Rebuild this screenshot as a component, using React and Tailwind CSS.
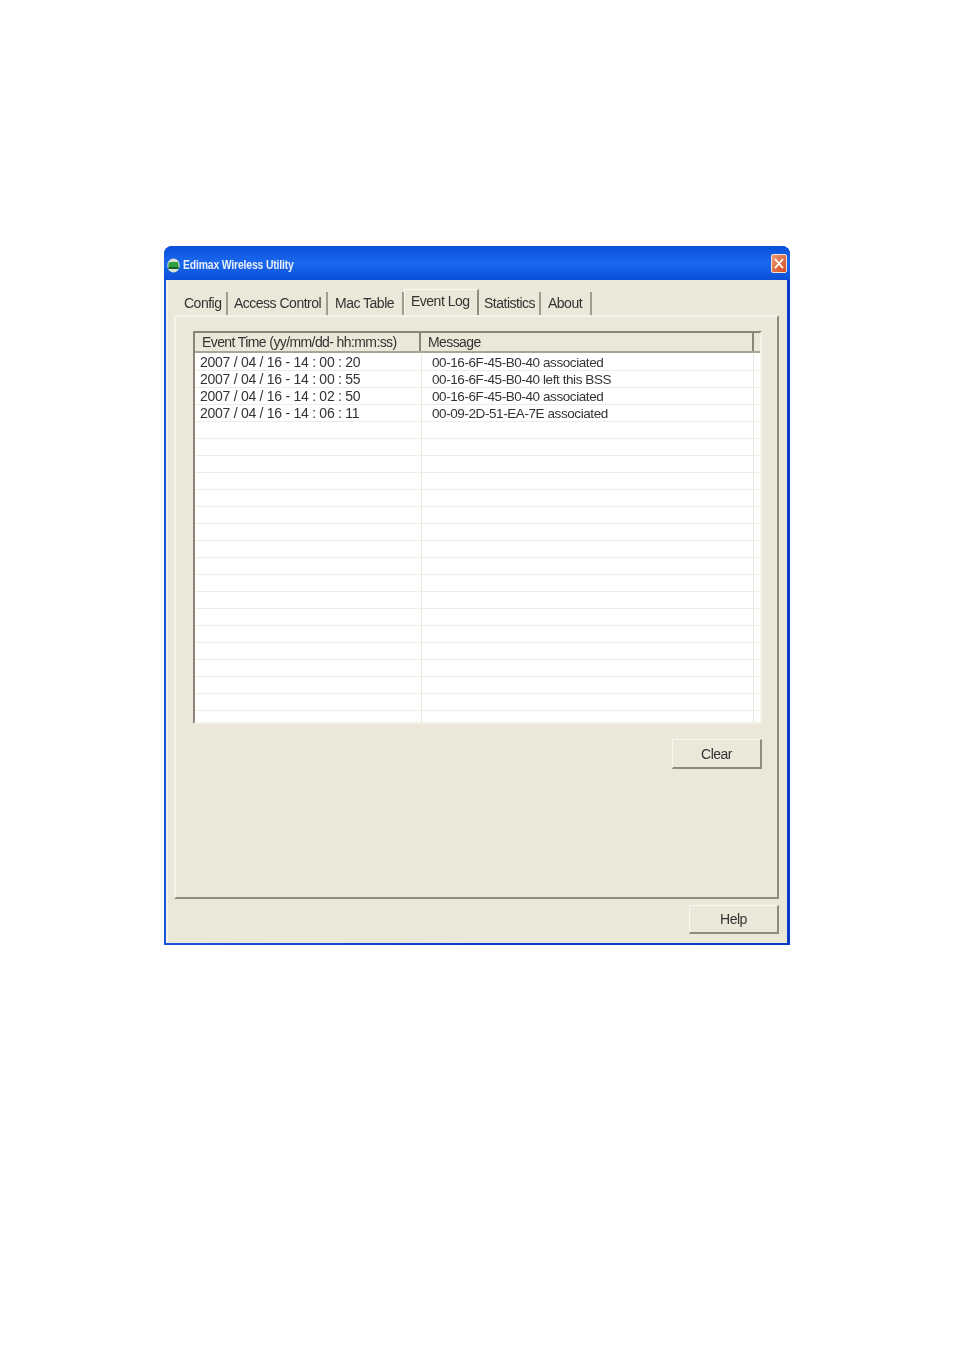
const rows = [
  ['2007 / 04 / 16 - 14 : 00 : 20', '00-16-6F-45-B0-40 associated'],
  ['2007 / 04 / 16 - 14 : 00 : 55', '00-16-6F-45-B0-40 left this BSS'],
  ['2007 / 04 / 16 - 14 : 02 : 50', '00-16-6F-45-B0-40 associated'],
  ['2007 / 04 / 16 - 14 : 06 : 11', '00-09-2D-51-EA-7E associated'],
  ...Array.from({ length: 18 }, () => ['', '']),
]

function Tab({ label, className }) {
  return (
    <div className={`h-[23px] flex items-center border-r-2 border-[#a09d8e] text-[14px] tracking-[-0.5px] text-[#333] ${className}`}>
      {label}
    </div>
  )
}

function XpButton({ label, className }) {
  return (
    <div className={`pt-[1px] flex items-center justify-center border border-t-[#f8f7f0] border-l-[#f8f7f0] border-r-[#8f8c7e] border-b-[#8f8c7e] border-r-2 border-b-2 text-[14px] tracking-[-0.5px] text-[#333] ${className}`}>
      {label}
    </div>
  )
}

function App() {
  return (
    <div className="w-[954px] h-[1350px] bg-white pt-[246px] pl-[164px] font-['Liberation_Sans',sans-serif]">
      <div className="w-[626px] h-[699px] flex flex-col rounded-t-[8px] overflow-hidden bg-gradient-to-r from-[#1a55dc] via-[#0a3bd0] to-[#0a3ac8] [filter:blur(0.35px)]">
        {/* Title bar */}
        <div className="h-[34px] shrink-0 flex items-center justify-between pl-[3px] pr-[3px] pt-[4px] bg-gradient-to-b from-[#0a50d8] via-[#1a68ee] to-[#0a4ed6]">
          <div className="flex items-center gap-[3px]">
            <svg width="13" height="15" viewBox="0 0 13 15">
              <ellipse cx="6.5" cy="7.5" rx="6.2" ry="7" fill="#d8e0d4" />
              <rect x="1.5" y="4" width="10" height="7" rx="1.5" fill="#2f9e3c" />
              <rect x="1.5" y="9" width="10" height="2" fill="#14602a" />
            </svg>
            <span className="text-[13px] font-bold text-[#e8eefc] tracking-[-0.2px] whitespace-nowrap scale-x-[0.8] origin-left">Edimax Wireless Utility</span>
          </div>
          <div className="w-[16px] h-[19px] mb-[3px] flex items-center justify-center rounded-[2px] border border-[#f0e0d8] bg-gradient-to-br from-[#ee9a70] to-[#d0481e]">
            <svg width="10" height="11" viewBox="0 0 10 11">
              <path d="M1 1 L9 10 M9 1 L1 10" stroke="#fff" strokeWidth="1.8" />
            </svg>
          </div>
        </div>

        {/* Dialog body */}
        <div className="flex-1 ml-[2px] mb-[2px] mr-[3px] bg-[#ebe8d9] pt-[12px] pl-[6px] pr-[6px] border-l-2 border-[#f4f3ea]">
          {/* Tabs */}
          <div className="h-[23px] flex items-end pl-[6px] text-[#333]">
            <Tab label="Config" className="w-[48px] pl-[4px]" />
            <Tab label="Access Control" className="w-[100px] pl-[6px]" />
            <Tab label="Mac Table" className="w-[76px] pl-[7px]" />
            <div className="h-[26px] w-[75px] pl-[6px] pb-[3px] flex items-center bg-[#ebe8d9] border-t border-l border-[#f8f7f0] border-r-2 border-r-[#8f8c7e] text-[14px] tracking-[-0.5px] text-[#333]">
              Event Log
            </div>
            <Tab label="Statistics" className="w-[62px] pl-[5px]" />
            <Tab label="About" className="w-[51px] pl-[7px]" />
          </div>

          {/* Tab panel */}
          <div className="w-[605px] h-[584px] pt-[14px] pl-[17px] border-t-2 border-t-[#f4f3ea] border-l-2 border-l-[#f4f3ea] border-r-2 border-r-[#8f8c7e] border-b-2 border-b-[#8f8c7e]">
            {/* Event list */}
            <div className="w-[569px] h-[393px] flex flex-col bg-white border-l-2 border-l-[#8a8778] border-t-2 border-t-[#8a8778] border-r-2 border-r-[#f4f3ea] border-b-2 border-b-[#f4f3ea] overflow-hidden">
              <div className="h-[20px] shrink-0 flex bg-[#ebe8d9] border-b-2 border-b-[#a8a596] text-[14px] leading-[18px] tracking-[-0.6px] text-[#333]">
                <div className="w-[226px] pl-[7px] border-r-2 border-[#8a8778] whitespace-nowrap">Event Time (yy/mm/dd- hh:mm:ss)</div>
                <div className="w-[333px] pl-[7px] border-r-2 border-[#8a8778]">Message</div>
                <div className="flex-1" />
              </div>
              <div className="pt-[1px]">
                {rows.map((row, i) => (
                  <div key={i} className="h-[17px] flex border-b border-[#f0eee3] text-[#333] whitespace-nowrap">
                    <div className="w-[227px] pl-[5px] border-r border-[#e8e6da] text-[14px] leading-[16px] tracking-[-0.27px]">{row[0]}</div>
                    <div className="w-[332px] pl-[10px] border-r border-[#e8e6da] text-[13.5px] leading-[18px] tracking-[-0.42px]">{row[1]}</div>
                  </div>
                ))}
              </div>
            </div>

            <div className="w-[569px] flex justify-end mt-[15px]">
              <XpButton label="Clear" className="w-[90px] h-[30px]" />
            </div>
          </div>

          <div className="w-[605px] flex justify-end mt-[6px]">
            <XpButton label="Help" className="w-[90px] h-[29px]" />
          </div>
        </div>
      </div>
    </div>
  )
}

export default App
